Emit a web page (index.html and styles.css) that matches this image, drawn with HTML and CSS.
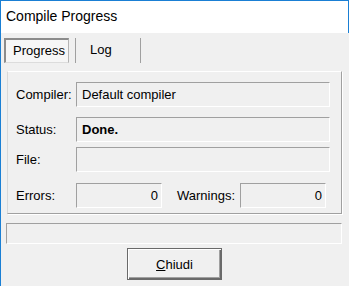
FILE: index.html
```html
<!DOCTYPE html>
<html>
<head>
<meta charset="utf-8">
<link rel="stylesheet" href="styles.css">
</head>
<body>
<div class="window">
  <div class="titlebar">Compile Progress</div>
  <div class="client">
    <div class="tabs">
      <div class="tab tab-active">Progress</div>
      <div class="tab tab-log">Log</div>
    </div>
    <div class="panel">
      <div class="row row-compiler">
        <span class="label">Compiler:</span>
        <div class="field field-wide">Default compiler</div>
      </div>
      <div class="row row-status">
        <span class="label">Status:</span>
        <div class="field field-wide field-bold">Done.</div>
      </div>
      <div class="row row-file">
        <span class="label">File:</span>
        <div class="field field-wide"></div>
      </div>
      <div class="row row-counts">
        <span class="label">Errors:</span>
        <div class="field field-num">0</div>
        <span class="label label-warn">Warnings:</span>
        <div class="field field-num">0</div>
      </div>
    </div>
    <div class="progress"></div>
    <div class="actions">
      <button class="btn"><span class="ul">C</span>hiudi</button>
    </div>
  </div>
</div>
</body>
</html>
```

FILE: styles.css
```css
html, body {
  margin: 0;
  padding: 0;
  background: #f0f0f0;
}
body {
  width: 349px;
  height: 286px;
  overflow: hidden;
  font-family: "Liberation Sans", Arial, sans-serif;
  font-size: 13px;
  color: #000;
}
.window {
  height: 286px;
  border-left: 1px solid #1a7fd4;
  box-sizing: border-box;
  background: #f0f0f0;
}
.titlebar {
  height: 32px;
  border-top: 1px solid #1a7fd4;
  border-right: 1px solid #1a7fd4;
  background: #fff;
  padding-left: 5px;
  font-size: 14px;
  line-height: 31px;
  color: #000;
}
.client {
  padding-top: 5px;
}
.tabs {
  display: flex;
  height: 25px;
  padding-left: 3px;
}
.tab {
  box-sizing: border-box;
  height: 25px;
  line-height: 23px;
}
.tab-active {
  width: 65px;
  border-top: 2px solid #8c8c8c;
  border-left: 2px solid #8c8c8c;
  border-right: 1px solid #b4b4b4;
  border-bottom: 1px solid #dcdcdc;
  background: #f6f6f6;
  padding-left: 7px;
  line-height: 21px;
}
.tab-log {
  margin-left: 6px;
  width: 66px;
  border-left: 1px solid #a0a0a0;
  border-right: 1px solid #a0a0a0;
  padding-left: 14px;
}
.panel {
  box-sizing: border-box;
  margin-top: 8px;
  margin-left: 6px;
  width: 335px;
  height: 143px;
  border-top: 1px solid #fff;
  border-left: 1px solid #d8d8d8;
  border-right: 1px solid #a0a0a0;
  border-bottom: 1px solid #a0a0a0;
  box-shadow: 1px 1px 0 #fff;
  padding: 10px 0 0 8px;
}
.row {
  display: flex;
  align-items: center;
  height: 25px;
}
.row-status {
  margin-top: 10px;
}
.row-file {
  margin-top: 5px;
}
.row-counts {
  margin-top: 11px;
}
.label {
  width: 60px;
  flex: none;
}
.label-warn {
  width: auto;
  margin-left: 15px;
  margin-right: 5px;
}
.field {
  box-sizing: border-box;
  height: 25px;
  line-height: 23px;
  border-top: 1px solid #a0a0a0;
  border-left: 1px solid #a0a0a0;
  border-right: 1px solid #fff;
  border-bottom: 1px solid #fff;
  padding-left: 5px;
  white-space: nowrap;
}
.field-wide {
  width: 254px;
}
.field-bold {
  font-weight: bold;
}
.field-num {
  width: 86px;
  text-align: right;
  padding-right: 3px;
}
.progress {
  box-sizing: border-box;
  margin-top: 9px;
  margin-left: 5px;
  width: 336px;
  height: 21px;
  border-top: 1px solid #a0a0a0;
  border-left: 1px solid #a0a0a0;
  border-right: 1px solid #fff;
  border-bottom: 1px solid #fff;
}
.actions {
  display: flex;
  padding-left: 126px;
  margin-top: 4px;
}
.btn {
  box-sizing: border-box;
  width: 95px;
  height: 32px;
  margin: 0;
  padding: 0;
  font-family: "Liberation Sans", Arial, sans-serif;
  font-size: 13px;
  color: #000;
  background: #f0f0f0;
  border: 1px solid #6a6a6a;
  border-radius: 0;
  box-shadow: inset 1px 1px 0 #fff, inset -1px -1px 0 #6a6a6a, inset -2px -2px 0 #a0a0a0;
}
.ul {
  text-decoration: underline;
}
```
